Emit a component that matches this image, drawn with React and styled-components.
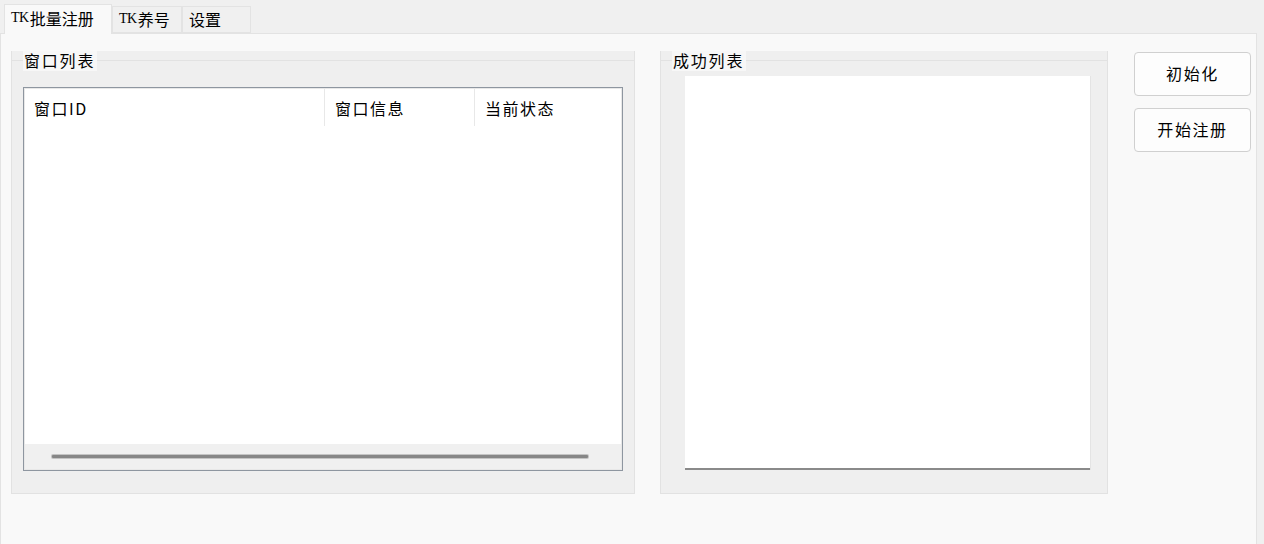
import React from 'react'
import styled, { createGlobalStyle } from 'styled-components'

const GlobalStyle = createGlobalStyle`
  html, body {
    margin: 0;
    padding: 0;
    background: #f0f0f0;
  }
  body {
    font-family: "Noto Sans CJK SC", "Noto Sans", sans-serif;
    color: #000;
  }
`

const Window = styled.div`
  width: 1264px;
  height: 544px;
  display: flex;
  flex-direction: column;
  background: #f0f0f0;
  overflow: hidden;
`

const TabBar = styled.div`
  display: flex;
  align-items: flex-end;
  height: 33px;
  padding-left: 4px;
  box-sizing: border-box;
`

const Tab = styled.div`
  height: ${p => (p.active ? '30px' : '27px')};
  width: ${p => p.width}px;
  box-sizing: border-box;
  display: flex;
  align-items: center;
  justify-content: flex-start;
  padding-left: ${p => (p.active ? 6 : 6)}px;
  padding-bottom: ${p => (p.active ? 3 : 1)}px;
  background: ${p => (p.active ? '#f9f9f9' : '#f0f0f0')};
  border: 1px solid #e3e3e3;
  border-bottom: ${p => (p.active ? 'none' : '1px solid #e3e3e3')};
  margin-bottom: ${p => (p.active ? '-1px' : '0')};
  position: relative;
  z-index: ${p => (p.active ? 2 : 1)};
  font-size: 16px;
  line-height: 20px;
  white-space: nowrap;
`

const Latin = styled.span`
  font-family: "Liberation Serif", serif;
  font-size: 14px;
  letter-spacing: -0.5px;
  margin-right: 1px;
`

const Pane = styled.div`
  flex: 1;
  width: 1257px;
  box-sizing: border-box;
  background: #f9f9f9;
  border: 1px solid #e3e3e3;
  border-bottom: none;
  display: flex;
  align-items: flex-start;
  padding: 17px 0 0 10px;
`

const GroupBox = styled.div`
  width: ${p => p.width}px;
  height: 443px;
  box-sizing: border-box;
  margin-right: ${p => p.gap}px;
  background: #efefef;
  border: 1px solid #e2e2e2;
  border-top: none;
  display: flex;
  flex-direction: column;
  position: relative;
  &::before {
    content: '';
    position: absolute;
    left: 0;
    right: 0;
    top: 9px;
    border-top: 1px solid #e2e2e2;
  }
`

const GroupTitle = styled.div`
  align-self: flex-start;
  margin-left: 11px;
  padding: 0 2px 0 1px;
  height: 20px;
  background: #f7f7f7;
  font-size: 16px;
  line-height: 18px;
  letter-spacing: 1.8px;
  position: relative;
  z-index: 1;
`

const ListView = styled.div`
  margin: 16px 11px 0 11px;
  height: 384px;
  box-sizing: border-box;
  border: 1px solid #8e96a0;
  box-shadow: inset 0 0 0 1px #e8e8e8;
  background: #fff;
  display: flex;
  flex-direction: column;
`

const Header = styled.div`
  display: flex;
  height: 37px;
  margin-top: 1px;
`

const HeaderCell = styled.div`
  width: ${p => p.width}px;
  box-sizing: border-box;
  padding-left: 10px;
  display: flex;
  align-items: center;
  font-size: 16px;
  letter-spacing: 1.5px;
  border-right: ${p => (p.last ? 'none' : '1px solid #e8e8e8')};
`

const Rows = styled.div`
  flex: 1;
`

const ScrollBar = styled.div`
  height: 25px;
  margin: 0 1px 1px 1px;
  background: #f0f0f0;
  display: flex;
  align-items: center;
  padding: 0 33px 0 27px;
`

const Thumb = styled.div`
  flex: 1;
  height: 3px;
  background: #878787;
  border-radius: 1px;
  box-shadow: 0 0 0 1px #c4c4c4;
`

const SuccessList = styled.div`
  margin: 5px 17px 0 24px;
  height: 392px;
  background: #fff;
  border-bottom: 2px solid #8a8a8a;
  box-shadow: 1px 0 0 #e4e4e4;
`

const Buttons = styled.div`
  display: flex;
  flex-direction: column;
  gap: 12px;
  padding-top: 1px;
`

const Button = styled.button`
  width: 117px;
  height: 44px;
  box-sizing: border-box;
  background: #fdfdfd;
  border: 1px solid #d0d0d0;
  border-radius: 4px;
  font-family: inherit;
  font-size: 16px;
  letter-spacing: 1.6px;
  color: #000;
  padding: 0;
  padding-bottom: 3px;
`

export default function App() {
  return (
    <Window>
      <GlobalStyle />
      <TabBar>
        <Tab active width={108}><Latin>TK</Latin>批量注册</Tab>
        <Tab width={70}><Latin>TK</Latin>养号</Tab>
        <Tab width={69}>设置</Tab>
      </TabBar>
      <Pane>
        <GroupBox width={624} gap={25}>
          <GroupTitle>窗口列表</GroupTitle>
          <ListView>
            <Header>
              <HeaderCell width={301}>窗口ID</HeaderCell>
              <HeaderCell width={150}>窗口信息</HeaderCell>
              <HeaderCell width={140} last>当前状态</HeaderCell>
            </Header>
            <Rows />
            <ScrollBar>
              <Thumb />
            </ScrollBar>
          </ListView>
        </GroupBox>
        <GroupBox width={448} gap={26}>
          <GroupTitle>成功列表</GroupTitle>
          <SuccessList />
        </GroupBox>
        <Buttons>
          <Button>初始化</Button>
          <Button>开始注册</Button>
        </Buttons>
      </Pane>
    </Window>
  )
}
